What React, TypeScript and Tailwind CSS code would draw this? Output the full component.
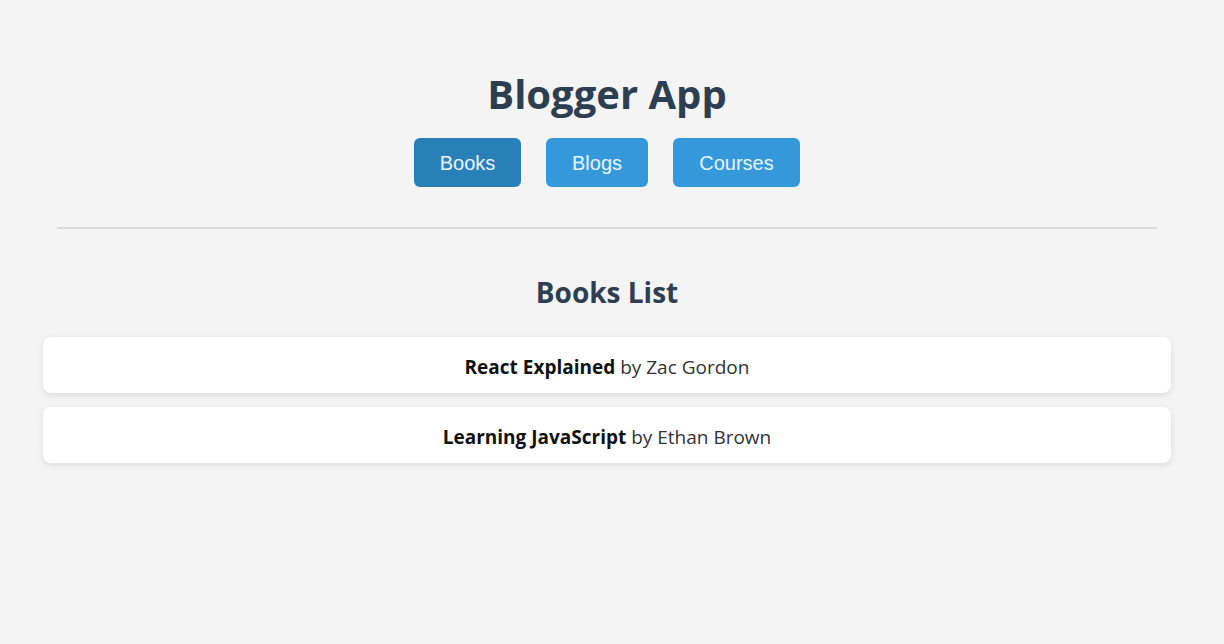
import React from "react";

export default function App() {
  const books = [
    { title: "React Explained", author: "Zac Gordon" },
    { title: "Learning JavaScript", author: "Ethan Brown" },
  ];
  return (
    <div className="min-h-[644px] w-full bg-[#f4f4f4]" style={{ fontFamily: '"Open Sans", "Noto Sans", sans-serif' }}>
      <div className="w-[1214px] px-[43px] pt-[65px]">
        <h1 className="text-center text-[40px] font-bold leading-[58px] text-[#2c3e50]">Blogger App</h1>
        <div className="mt-[15px] flex justify-center gap-[25px]" style={{ fontFamily: '"Liberation Sans", Arial, sans-serif' }}>
          <button className="h-[49px] w-[107px] rounded-[6px] bg-[#2980b9] text-[20px] text-[#eaf4fb]">Books</button>
          <button className="h-[49px] w-[102px] rounded-[6px] bg-[#3498db] text-[20px] text-[#eaf4fb]">Blogs</button>
          <button className="h-[49px] w-[127px] rounded-[6px] bg-[#3498db] text-[20px] text-[#eaf4fb]">Courses</button>
        </div>
        <div className="mx-[14px] mt-[40px] h-[2px] bg-[#dcdcdc]" />
        <h2 className="mt-[43px] text-center text-[28px] font-bold leading-[40px] text-[#2c3e50]">Books List</h2>
        <div className="mt-[25px] flex flex-col gap-[14px]">
          {books.map((b) => (
            <div key={b.title} className="flex h-[56px] items-center justify-center rounded-[8px] bg-white pt-[4px] text-[19px] text-[#333] shadow-[0_2px_6px_rgba(0,0,0,0.1)]">
              <span>
                <strong className="font-bold text-[#111]">{b.title}</strong> by {b.author}
              </span>
            </div>
          ))}
        </div>
      </div>
    </div>
  );
}
